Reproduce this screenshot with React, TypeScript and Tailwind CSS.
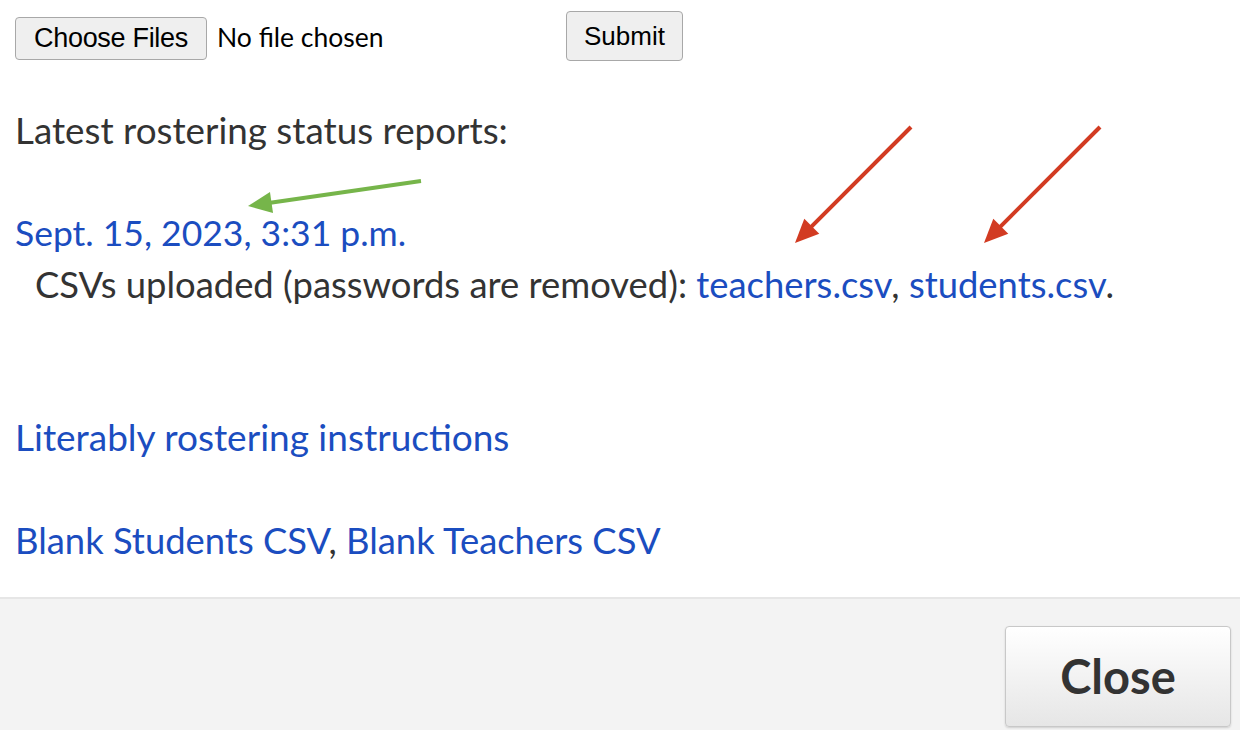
import React from 'react';

const Arrow = ({
  x1,
  y1,
  x2,
  y2,
  color,
}: {
  x1: number;
  y1: number;
  x2: number;
  y2: number;
  color: string;
}) => {
  const angle = Math.atan2(y2 - y1, x2 - x1);
  const len = 26;
  const spread = 0.42;
  const bx = x2 - Math.cos(angle) * len * 0.8;
  const by = y2 - Math.sin(angle) * len * 0.8;
  const p1 = `${x2 - Math.cos(angle - spread) * len},${y2 - Math.sin(angle - spread) * len}`;
  const p2 = `${x2 - Math.cos(angle + spread) * len},${y2 - Math.sin(angle + spread) * len}`;
  return (
    <g>
      <line x1={x1} y1={y1} x2={bx} y2={by} stroke={color} strokeWidth={4} />
      <polygon points={`${x2},${y2} ${p1} ${p2}`} fill={color} />
    </g>
  );
};

const App = () => {
  return (
    <div className="relative w-[1240px] h-[730px] bg-white overflow-hidden font-['Lato',sans-serif] text-[#333]">
      <div className="h-[597px] pl-[15px] flex flex-col">
        <div className="flex items-center h-[72px]">
          <button className="h-[43px] w-[192px] mt-[4px] border border-[#a8a8a8] rounded-[4px] bg-[#efefef] font-['Liberation_Sans',sans-serif] text-[27px] tracking-[-0.3px] text-black">
            Choose Files
          </button>
          <span className="ml-[10px] mt-[4px] text-[26.5px] text-black w-[349px]">
            No file chosen
          </span>
          <button className="h-[50px] w-[117px] border border-[#a8a8a8] rounded-[4px] bg-[#efefef] font-['Liberation_Sans',sans-serif] text-[26px] text-black">
            Submit
          </button>
        </div>
        <p className="mt-[38px] text-[36.8px] leading-[40px]">
          Latest rostering status reports:
        </p>
        <a className="mt-[63px] text-[35.5px] leading-[40px] text-[#1b4dc0] self-start" href="#">
          Sept. 15, 2023, 3:31 p.m.
        </a>
        <p className="pl-[20px] mt-[11px] text-[36.4px] leading-[40px]">
          CSVs uploaded (passwords are removed):{' '}
          <a className="text-[#1b4dc0]" href="#">
            teachers.csv
          </a>
          ,{' '}
          <a className="text-[#1b4dc0]" href="#">
            students.csv
          </a>
          .
        </p>
        <a className="mt-[113px] text-[37px] leading-[40px] text-[#1b4dc0] self-start" href="#">
          Literably rostering instructions
        </a>
        <p className="mt-[63px] text-[36.4px] leading-[40px]">
          <a className="text-[#1b4dc0]" href="#">
            Blank Students CSV
          </a>
          ,{' '}
          <a className="text-[#1b4dc0]" href="#">
            Blank Teachers CSV
          </a>
        </p>
      </div>
      <div className="h-[133px] border-t-2 border-[#e6e6e6] bg-[#f3f3f3] flex justify-end pr-[9px] pt-[27px]">
        <button className="w-[226px] h-[101px] rounded-[4px] border border-[#c8c8c8] bg-gradient-to-b from-white to-[#e6e6e6] shadow-[0_1px_2px_rgba(0,0,0,0.15)] text-[47px] font-bold text-[#333]">
          Close
        </button>
      </div>
      <svg className="absolute inset-0 pointer-events-none" width={1240} height={730}>
        <Arrow x1={421} y1={181} x2={248} y2={206} color="#76b54a" />
        <Arrow x1={911} y1={127} x2={795} y2={243} color="#d23b22" />
        <Arrow x1={1100} y1={127} x2={984} y2={243} color="#d23b22" />
      </svg>
    </div>
  );
};

export default App;
